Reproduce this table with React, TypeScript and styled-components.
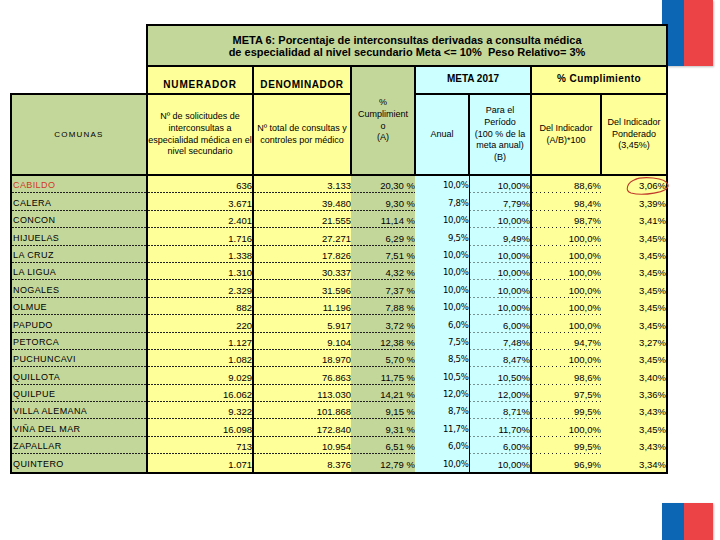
import React from "react";
import styled, { createGlobalStyle } from "styled-components";

const GREEN = "#c4d79b";
const YELLOW = "#ffff99";
const CYAN = "#ccffff";

const Global = createGlobalStyle`
  html, body { margin: 0; padding: 0; background: #fff; }
  body { font-family: "Liberation Sans", Arial, sans-serif; }
`;

const Page = styled.div`
  width: 720px;
  height: 540px;
  display: flex;
  overflow: hidden;
  background: #fff;
`;

const Main = styled.div`
  position: relative;
  z-index: 1;
  flex: none;
  width: 666px;
  box-sizing: border-box;
  padding: 24px 0 0 10px;
`;

const FlagStrip = styled.div`
  flex: none;
  width: 51px;
  height: 540px;
  margin-left: -4px;
  display: flex;
  flex-direction: column;
  justify-content: space-between;
`;

const Flag = styled.div<{ $h: number }>`
  height: ${(p) => p.$h}px;
  display: flex;
  box-shadow: 1px 1px 2px rgba(0, 0, 0, 0.25);
`;

const FlagBlue = styled.div`
  width: 22px;
  background: #0d66b3;
`;

const FlagRed = styled.div`
  flex: 1;
  background: #ec4346;
`;

const Sheet = styled.table`
  border-collapse: collapse;
  table-layout: fixed;
  width: 656px;
  color: #000;
  font-family: "Liberation Sans", Arial, sans-serif;
`;

const Col = styled.col<{ $w: number }>`
  width: ${(p) => p.$w}px;
`;

const Corner = styled.td`
  border: none;
  padding: 0;
`;

const TitleCell = styled.td`
  height: 38px;
  padding: 1px 0 0;
  border: 2px solid #000;
  background: ${GREEN};
  text-align: center;
  vertical-align: middle;
  font-size: 11px;
  font-weight: bold;
  line-height: 12px;
  white-space: nowrap;
`;

const LabelCell = styled.td<{ $bg: string; $valign: string; $ls: number }>`
  height: 24px;
  padding: 0 0 2px;
  border: 2px solid #000;
  background: ${(p) => p.$bg};
  text-align: center;
  vertical-align: ${(p) => p.$valign};
  font-size: 10px;
  font-weight: bold;
  letter-spacing: ${(p) => p.$ls}px;
  line-height: 12px;
  white-space: nowrap;
`;

const DescCell = styled.td<{ $bg: string }>`
  height: 79px;
  padding: 0;
  border: 2px solid #000;
  background: ${(p) => p.$bg};
  text-align: center;
  vertical-align: middle;
  font-size: 9px;
  line-height: 11.8px;
  white-space: nowrap;
`;

const ComunasCell = styled(DescCell)`
  font-size: 8px;
  letter-spacing: 1.2px;
`;

type Rule = "dash" | "dot" | "none";
type Edge = "thick" | "thin" | "none";

const ruleImage = (r: Rule) =>
  r === "dash"
    ? "linear-gradient(to right, #222 2px, transparent 2px)"
    : r === "dot"
    ? "linear-gradient(to right, #222 1px, transparent 1px)"
    : "none";

const DataCell = styled.td<{
  $bg: string;
  $rule: Rule;
  $right: Edge;
  $left?: boolean;
  $last?: boolean;
  $name?: boolean;
  $red?: boolean;
  $alt?: boolean;
}>`
  height: 17.4px;
  padding: ${(p) => (p.$name ? "0 0 0 1px" : "0")};
  background-color: ${(p) => p.$bg};
  background-image: ${(p) => (p.$last ? "none" : ruleImage(p.$rule))};
  background-size: ${(p) => (p.$rule === "dot" ? "4px 1px" : "3px 1px")};
  background-repeat: repeat-x;
  background-position: left bottom;
  border-left: ${(p) => (p.$left ? "2px solid #000" : "none")};
  border-right: ${(p) =>
    p.$right === "thick" ? "2px solid #000" : p.$right === "thin" ? "1px solid #000" : "none"};
  border-bottom: ${(p) => (p.$last ? "2px solid #000" : "none")};
  text-align: ${(p) => (p.$name ? "left" : "right")};
  vertical-align: bottom;
  font-family: ${(p) =>
    p.$alt ? '"DejaVu Sans", Verdana, sans-serif' : '"Liberation Sans", Arial, sans-serif'};
  font-size: ${(p) => (p.$name ? 9 : p.$alt ? 8.5 : 9.5)}px;
  letter-spacing: ${(p) => (p.$name ? 0.4 : p.$alt ? -0.3 : 0)}px;
  line-height: 15px;
  color: ${(p) => (p.$red ? "#cc3a28" : "#000")};
  white-space: nowrap;
  overflow: hidden;
`;

const Oval = styled.svg`
  position: absolute;
  left: 624px;
  top: 176px;
  overflow: visible;
`;

const rows: string[][] = [
  ["CABILDO", "636", "3.133", "20,30 %", "10,0%", "10,00%", "88,6%", "3,06%"],
  ["CALERA", "3.671", "39.480", "9,30 %", "7,8%", "7,79%", "98,4%", "3,39%"],
  ["CONCON", "2.401", "21.555", "11,14 %", "10,0%", "10,00%", "98,7%", "3,41%"],
  ["HIJUELAS", "1.716", "27.271", "6,29 %", "9,5%", "9,49%", "100,0%", "3,45%"],
  ["LA CRUZ", "1.338", "17.826", "7,51 %", "10,0%", "10,00%", "100,0%", "3,45%"],
  ["LA LIGUA", "1.310", "30.337", "4,32 %", "10,0%", "10,00%", "100,0%", "3,45%"],
  ["NOGALES", "2.329", "31.596", "7,37 %", "10,0%", "10,00%", "100,0%", "3,45%"],
  ["OLMUE", "882", "11.196", "7,88 %", "10,0%", "10,00%", "100,0%", "3,45%"],
  ["PAPUDO", "220", "5.917", "3,72 %", "6,0%", "6,00%", "100,0%", "3,45%"],
  ["PETORCA", "1.127", "9.104", "12,38 %", "7,5%", "7,48%", "94,7%", "3,27%"],
  ["PUCHUNCAVI", "1.082", "18.970", "5,70 %", "8,5%", "8,47%", "100,0%", "3,45%"],
  ["QUILLOTA", "9.029", "76.863", "11,75 %", "10,5%", "10,50%", "98,6%", "3,40%"],
  ["QUILPUE", "16.062", "113.030", "14,21 %", "12,0%", "12,00%", "97,5%", "3,36%"],
  ["VILLA ALEMANA", "9.322", "101.868", "9,15 %", "8,7%", "8,71%", "99,5%", "3,43%"],
  ["VIÑA DEL MAR", "16.098", "172.840", "9,31 %", "11,7%", "11,70%", "100,0%", "3,45%"],
  ["ZAPALLAR", "713", "10.954", "6,51 %", "6,0%", "6,00%", "99,5%", "3,43%"],
  ["QUINTERO", "1.071", "8.376", "12,79 %", "10,0%", "10,00%", "96,9%", "3,34%"],
];

const cols: { w: number; bg: string; rule: Rule; right: Edge; alt?: boolean }[] = [
  { w: 136, bg: GREEN, rule: "dash", right: "thick" },
  { w: 106, bg: YELLOW, rule: "dash", right: "thick" },
  { w: 98, bg: YELLOW, rule: "dash", right: "none" },
  { w: 64, bg: GREEN, rule: "dash", right: "none" },
  { w: 54, bg: CYAN, rule: "none", right: "thin", alt: true },
  { w: 62, bg: CYAN, rule: "dot", right: "thick" },
  { w: 70, bg: YELLOW, rule: "dot", right: "none" },
  { w: 66, bg: YELLOW, rule: "none", right: "thick" },
];

export default function App() {
  return (
    <Page>
      <Global />
      <Main>
        <Sheet>
          <colgroup>
            {cols.map((c, i) => (
              <Col key={i} $w={c.w} />
            ))}
          </colgroup>
          <tbody>
            <tr>
              <Corner />
              <TitleCell colSpan={7}>
                META 6: Porcentaje de interconsultas derivadas a consulta médica
                <br />
                de especialidad al nivel secundario Meta &lt;= 10%{"\u00a0 "}Peso Relativo= 3%
              </TitleCell>
            </tr>
            <tr>
              <Corner />
              <LabelCell $bg={YELLOW} $valign="bottom" $ls={0.8}>
                NUMERADOR
              </LabelCell>
              <LabelCell $bg={YELLOW} $valign="bottom" $ls={0.6}>
                DENOMINADOR
              </LabelCell>
              <DescCell $bg={GREEN} rowSpan={2}>
                %<br />
                Cumplimient
                <br />o<br />
                (A)
              </DescCell>
              <LabelCell $bg={CYAN} $valign="middle" $ls={0} colSpan={2}>
                META 2017
              </LabelCell>
              <LabelCell $bg={YELLOW} $valign="middle" $ls={0.4} colSpan={2}>
                % Cumplimiento
              </LabelCell>
            </tr>
            <tr>
              <ComunasCell $bg={GREEN}>COMUNAS</ComunasCell>
              <DescCell $bg={YELLOW}>
                Nº de solicitudes de
                <br />
                interconsultas a
                <br />
                especialidad médica en el
                <br />
                nivel secundario
              </DescCell>
              <DescCell $bg={YELLOW}>
                Nº total de consultas y
                <br />
                controles por médico
              </DescCell>
              <DescCell $bg={CYAN}>Anual</DescCell>
              <DescCell $bg={CYAN}>
                Para el
                <br />
                Período
                <br />
                (100 % de la
                <br />
                meta anual)
                <br />
                (B)
              </DescCell>
              <DescCell $bg={YELLOW}>
                Del Indicador
                <br />
                (A/B)*100
              </DescCell>
              <DescCell $bg={YELLOW}>
                Del Indicador
                <br />
                Ponderado
                <br />
                (3,45%)
              </DescCell>
            </tr>
            {rows.map((r, ri) => (
              <tr key={r[0]}>
                {r.map((v, ci) => (
                  <DataCell
                    key={ci}
                    $bg={cols[ci].bg}
                    $rule={cols[ci].rule}
                    $right={cols[ci].right}
                    $left={ci === 0}
                    $last={ri === rows.length - 1}
                    $name={ci === 0}
                    $red={ri === 0 && ci === 0}
                    $alt={cols[ci].alt}
                  >
                    {v}
                  </DataCell>
                ))}
              </tr>
            ))}
          </tbody>
        </Sheet>
        <Oval width="48" height="24" viewBox="0 0 48 24">
          <path
            d="M10 4 C18 0, 42 1, 44 9 C45 17, 18 20, 7 17 C1 15, 2 6, 13 3"
            fill="none"
            stroke="#c0392b"
            strokeWidth="1.1"
          />
        </Oval>
      </Main>
      <FlagStrip>
        <Flag $h={66}>
          <FlagBlue />
          <FlagRed />
        </Flag>
        <Flag $h={37}>
          <FlagBlue />
          <FlagRed />
        </Flag>
      </FlagStrip>
    </Page>
  );
}
